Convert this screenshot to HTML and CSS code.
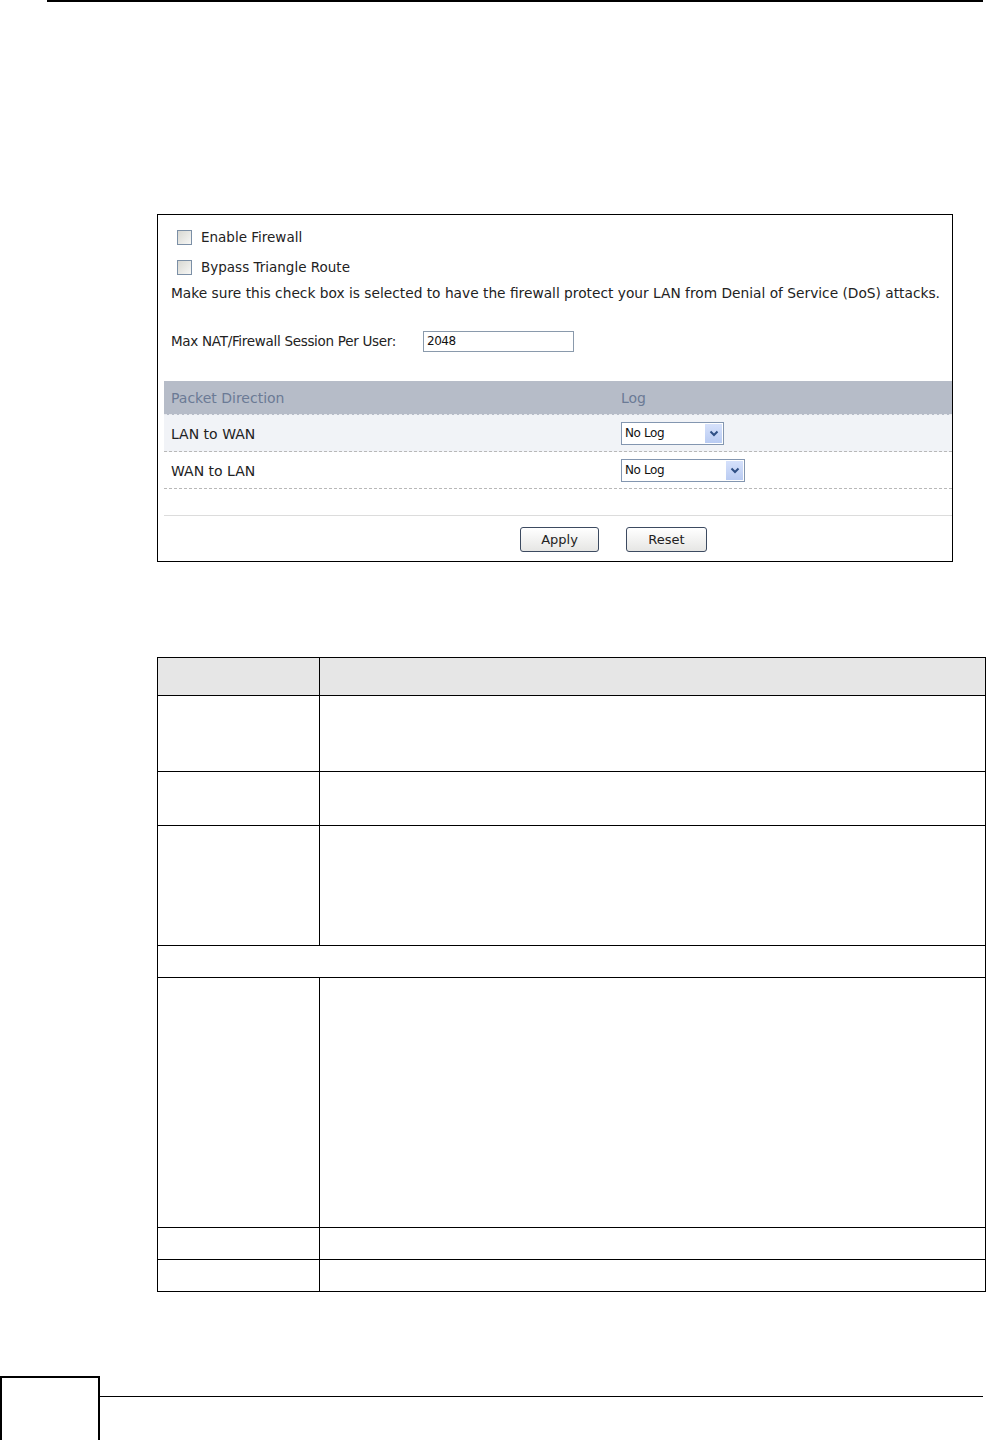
FILE: index.html
```html
<!DOCTYPE html>
<html lang="en">
<head>
  <meta charset="UTF-8" />
  <meta name="viewport" content="width=device-width, initial-scale=1.0"/>
  <title>Firewall General</title>
  <link rel="stylesheet" href="styles.css">
</head>
<body>
  <div class="top-rule"></div>

  <div class="screen">
    <div class="check-row">
      <span class="checkbox"></span>
      <span>Enable Firewall</span>
    </div>
    <div class="check-row">
      <span class="checkbox"></span>
      <span>Bypass Triangle Route</span>
    </div>
    <p class="note">Make sure this check box is selected to have the firewall protect your LAN from Denial of Service (DoS) attacks.</p>

    <div class="session-row">
      <span class="session-label">Max NAT/Firewall Session Per User:</span>
      <span class="textbox">2048</span>
    </div>

    <div class="log-table">
      <div class="log-head">
        <span class="col-dir">Packet Direction</span>
        <span>Log</span>
      </div>
      <div class="log-row shaded">
        <span class="col-dir">LAN to WAN</span>
        <span class="select short">No Log
          <span class="arrow"><svg width="10" height="7" viewBox="0 0 10 7"><path d="M1.5 1.5 L5 5 L8.5 1.5" fill="none" stroke="#2f4f85" stroke-width="2"/></svg></span>
        </span>
      </div>
      <div class="log-row">
        <span class="col-dir">WAN to LAN</span>
        <span class="select long">No Log
          <span class="arrow"><svg width="10" height="7" viewBox="0 0 10 7"><path d="M1.5 1.5 L5 5 L8.5 1.5" fill="none" stroke="#2f4f85" stroke-width="2"/></svg></span>
        </span>
      </div>
    </div>

    <div class="button-bar">
      <button class="btn apply">Apply</button>
      <button class="btn reset">Reset</button>
    </div>
  </div>

  <table class="desc">
    <tr class="head"><td class="label"></td><td></td></tr>
    <tr class="r1"><td class="label"></td><td></td></tr>
    <tr class="r2"><td class="label"></td><td></td></tr>
    <tr class="r3"><td class="label"></td><td></td></tr>
    <tr class="r4"><td colspan="2"></td></tr>
    <tr class="r5"><td class="label"></td><td></td></tr>
    <tr class="r6"><td class="label"></td><td></td></tr>
    <tr class="r6"><td class="label"></td><td></td></tr>
  </table>

  <div class="footer">
    <div class="page-box"></div>
    <div class="footer-rule"></div>
  </div>
</body>
</html>
```

FILE: styles.css
```css
body {
  margin: 0;
  background: #fff;
  font-family: "Liberation Sans", Arial, sans-serif;
  color: #000;
}
.top-rule {
  margin-left: 47px;
  width: 936px;
  height: 2px;
  background: #000;
}

/* router screen capture */
.screen {
  margin: 212px 0 0 157px;
  width: 794px;
  height: 339px;
  border: 1px solid #000;
  padding-top: 7px;
  font-family: "DejaVu Sans", Verdana, sans-serif;
  font-size: 13.5px;
  color: #222;
}
.check-row {
  display: flex;
  align-items: center;
  height: 30px;
  padding-left: 19px;
  gap: 9px;
}
.checkbox {
  width: 13px;
  height: 13px;
  border: 1px solid #7b8fa6;
  background: linear-gradient(135deg, #d8d8d2, #f7f7f5);
}
.note {
  margin: 0;
  height: 22px;
  line-height: 22px;
  padding-left: 13px;
  font-size: 13.75px;
  white-space: nowrap;
}
.session-row {
  display: flex;
  align-items: center;
  height: 30px;
  margin-top: 22px;
  padding-left: 13px;
}
.session-label {
  width: 252px;
  white-space: nowrap;
  letter-spacing: -0.3px;
}
.textbox {
  width: 146px;
  height: 19px;
  border: 1px solid #8a9aac;
  font-size: 12px;
  line-height: 19px;
  padding-left: 3px;
  color: #111;
  letter-spacing: -0.5px;
}
.log-table {
  margin: 25px 0 0 6px;
  font-size: 14px;
}
.log-head {
  display: flex;
  align-items: center;
  height: 33px;
  background: #b6bcc8;
  color: #6b7a95;
  border-bottom: 1px dashed #e8eaee;
}
.col-dir {
  width: 450px;
  padding-left: 7px;
}
.log-row {
  display: flex;
  align-items: center;
  height: 37px;
  padding-top: 1px;
  box-sizing: border-box;
  border-bottom: 1px dashed #b8b8b8;
}
.log-row.shaded {
  background: #f1f3f7;
}
.select {
  position: relative;
  height: 21px;
  border: 1px solid #8396b0;
  background: #fff;
  font-size: 12px;
  line-height: 21px;
  padding-left: 3px;
  color: #111;
  letter-spacing: -0.4px;
}
.select.short { width: 98px; }
.select.long { width: 119px; }
.arrow {
  position: absolute;
  right: 1px;
  top: 1px;
  width: 17px;
  height: 19px;
  background: linear-gradient(#d6e1fb, #b9cbf2);
  display: flex;
  align-items: center;
  justify-content: center;
}
.button-bar {
  margin: 26px 0 0 6px;
  border-top: 1px solid #dcdcdc;
  padding: 11px 0 0 356px;
  display: flex;
  gap: 27px;
}
.btn {
  height: 25px;
  border: 1px solid #3c4a60;
  border-radius: 3px;
  background: linear-gradient(#ffffff, #e6e6e4);
  font-family: "DejaVu Sans", Verdana, sans-serif;
  font-size: 13px;
  color: #222;
  padding: 0;
}
.btn.apply { width: 79px; }
.btn.reset { width: 81px; }

/* description table */
.desc {
  margin: 95px 0 0 157px;
  width: 829px;
  border-collapse: collapse;
}
.desc td {
  border: 1px solid #000;
  padding: 0;
}
.desc .label { width: 161px; }
.desc .head td { height: 37px; background: #e6e6e6; }
.desc .r1 td { height: 75px; }
.desc .r2 td { height: 53px; }
.desc .r3 td { height: 119px; }
.desc .r4 td { height: 31px; }
.desc .r5 td { height: 249px; }
.desc .r6 td { height: 31px; }

.footer {
  margin-top: 84px;
  display: flex;
  align-items: flex-start;
}
.page-box {
  width: 96px;
  height: 70px;
  border: 2px solid #000;
}
.footer-rule {
  margin-top: 20px;
  width: 883px;
  height: 1px;
  background: #000;
}
```
